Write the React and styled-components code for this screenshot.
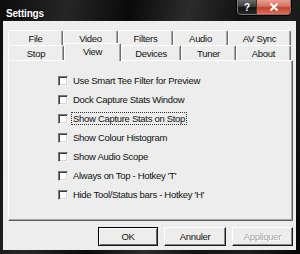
import React from "react";
import styled, { createGlobalStyle } from "styled-components";

const Global = createGlobalStyle`
  html, body { margin: 0; padding: 0; background: #000; }
  body { font-family: "Liberation Sans", Arial, sans-serif; }
`;

const Window = styled.div`
  width: 300px;
  height: 254px;
  display: flex;
  flex-direction: column;
  background: linear-gradient(100deg, #0c0c0c 0%, #262626 20%, #0a0a0a 38%, #2c2c2c 55%, #121212 70%, #1e1e1e 85%, #050505 100%);
  overflow: hidden;
`;

const TitleBar = styled.div`
  height: 21px;
  display: flex;
  align-items: flex-start;
  justify-content: space-between;
  padding: 0 9px 0 6px;
  box-sizing: border-box;
`;

const TitleText = styled.div`
  color: #fff;
  font-weight: bold;
  font-size: 10px;
  letter-spacing: -0.2px;
  line-height: 12px;
  margin-top: 8px;
  text-shadow: 0 0 3px rgba(0,0,0,0.9);
`;

const CaptionButtons = styled.div`
  display: flex;
  border: 1px solid #777;
  border-top: none;
  border-radius: 0 0 4px 4px;
  overflow: hidden;
  box-shadow: 0 0 0 1px #000;
`;

const CaptionButton = styled.div`
  height: 14px;
  width: ${(p) => p.$w}px;
  display: flex;
  align-items: center;
  justify-content: center;
  color: #fff;
  font-weight: bold;
  font-size: 10px;
  background: ${(p) =>
    p.$close
      ? "linear-gradient(#e7a094 0%, #d86e5d 45%, #c3402c 55%, #d8735f 100%)"
      : "linear-gradient(#6b6b6b 0%, #3d3d3d 45%, #111 55%, #2b2b2b 100%)"};
  border-left: ${(p) => (p.$close ? "1px solid #5a2a22" : "none")};
`;

const Client = styled.div`
  flex: 1;
  margin: 0 4px 4px 3px;
  background: #ededed;
  padding: 9px 3px 4px 5px;
  display: flex;
  flex-direction: column;
  box-sizing: border-box;
  font-size: 9.5px;
  letter-spacing: -0.3px;
  color: #111;
`;

const TabStrip = styled.div`
  display: flex;
  flex-direction: column;
  margin-right: 1px;
`;

const TabRow = styled.div`
  display: flex;
  height: 15px;
  padding-right: 1px;
`;

const Tab = styled.div`
  position: relative;
  width: ${(p) => p.$w}px;
  box-sizing: border-box;
  height: ${(p) => (p.$selected ? 18 : 15)}px;
  margin-top: ${(p) => (p.$selected ? -2 : 0)}px;
  margin-bottom: ${(p) => (p.$selected ? -1 : 0)}px;
  z-index: ${(p) => (p.$selected ? 2 : 1)};
  background: #ededed;
  border-top: 1px solid #fff;
  border-left: 1px solid #fff;
  border-right: 1px solid #6d6d6d;
  box-shadow: inset -1px 0 #a8a8a8;
  border-radius: 2px 2px 0 0;
  display: flex;
  justify-content: center;
  padding-top: 2px;
  line-height: 11px;
`;

const Panel = styled.div`
  flex: 1;
  box-sizing: border-box;
  border-top: 1px solid #fff;
  border-left: 1px solid #fff;
  border-right: 1px solid #5f5f5f;
  border-bottom: 1px solid #5f5f5f;
  box-shadow: inset -1px -1px #a4a4a4;
  padding: 10px 0 0 49px;
  display: flex;
  flex-direction: column;
`;

const OptionRow = styled.label`
  height: 19px;
  display: flex;
  align-items: center;
  gap: 5px;
`;

const Box = styled.span`
  width: 10px;
  height: 10px;
  box-sizing: border-box;
  background: #fff;
  border-top: 1px solid #7a7a7a;
  border-left: 1px solid #7a7a7a;
  border-right: 1px solid #f4f4f4;
  border-bottom: 1px solid #f4f4f4;
  box-shadow: inset 1px 1px #3c3c3c, inset -1px -1px #d8d8d8;
  flex: none;
`;

const OptionText = styled.span`
  line-height: 11px;
  padding: 0 1px;
  border: 1px ${(p) => (p.$focus ? "dotted #333" : "solid transparent")};
  margin-left: -2px;
`;

const ButtonRow = styled.div`
  display: flex;
  justify-content: flex-end;
  gap: 6px;
  margin-top: 6px;
`;

const Button = styled.div`
  width: ${(p) => p.$w}px;
  height: 19px;
  box-sizing: border-box;
  display: flex;
  align-items: center;
  justify-content: center;
  background: #ededed;
  color: ${(p) => (p.$disabled ? "#a8a8a8" : "#111")};
  text-shadow: ${(p) => (p.$disabled ? "1px 1px #fff" : "none")};
  border-top: 1px solid ${(p) => (p.$default ? "#000" : "#fff")};
  border-left: 1px solid ${(p) => (p.$default ? "#000" : "#fff")};
  border-right: 1px solid #1a1a1a;
  border-bottom: 1px solid #1a1a1a;
  box-shadow: ${(p) =>
    p.$default
      ? "inset 1px 1px #fff, inset -1px -1px #6a6a6a"
      : "inset -1px -1px #8a8a8a"};
`;

const row1 = [
  ["File", 55],
  ["Video", 55],
  ["Filters", 55],
  ["Audio", 55],
  ["AV Sync", 63],
];
const row2 = [
  ["Stop", 56],
  ["View", 57, true],
  ["Devices", 60],
  ["Tuner", 55],
  ["About", 55],
];

const options = [
  "Use Smart Tee Filter for Preview",
  "Dock Capture Stats Window",
  "Show Capture Stats on Stop",
  "Show Colour Histogram",
  "Show Audio Scope",
  "Always on Top - Hotkey 'T'",
  "Hide Tool/Status bars - Hotkey 'H'",
];

export default function App() {
  return (
    <>
      <Global />
      <Window>
        <TitleBar>
          <TitleText>Settings</TitleText>
          <CaptionButtons>
            <CaptionButton $w={18}>?</CaptionButton>
            <CaptionButton $w={33} $close>
              <svg width="10" height="8" viewBox="0 0 10 8">
                <path d="M1.5 0.5 L8.5 7.5 M8.5 0.5 L1.5 7.5" stroke="#fff" strokeWidth="2" />
              </svg>
            </CaptionButton>
          </CaptionButtons>
        </TitleBar>
        <Client>
          <TabStrip>
            <TabRow>
              {row1.map(([t, w]) => (
                <Tab key={t} $w={w}>{t}</Tab>
              ))}
            </TabRow>
            <TabRow>
              {row2.map(([t, w, s]) => (
                <Tab key={t} $w={w} $selected={s}>{t}</Tab>
              ))}
            </TabRow>
          </TabStrip>
          <Panel>
            {options.map((o, i) => (
              <OptionRow key={o}>
                <Box />
                <OptionText $focus={i === 2}>{o}</OptionText>
              </OptionRow>
            ))}
          </Panel>
          <ButtonRow>
            <Button $w={60} $default>OK</Button>
            <Button $w={62}>Annuler</Button>
            <Button $w={61} $disabled>Appliquer</Button>
          </ButtonRow>
        </Client>
      </Window>
    </>
  );
}
